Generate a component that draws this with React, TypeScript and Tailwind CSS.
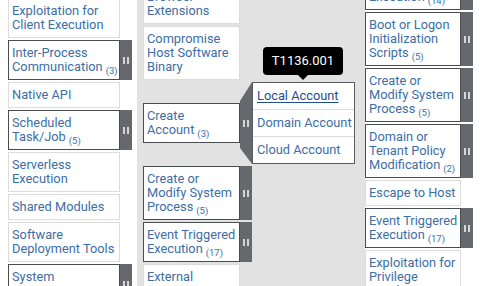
import React from "react";

const FONT = { fontFamily: "Roboto, 'Noto Sans', Arial, sans-serif" };

function Label({ lines, sub, link }: { lines: string[]; sub?: number; link?: boolean }) {
  return (
    <span className="block">
      {lines.map((l, i) => (
        <span key={i} className="block h-[14px] leading-[14px]">
          <span className={link ? "underline decoration-1 underline-offset-2" : ""}>{l}</span>
          {i === lines.length - 1 && sub !== undefined && (
            <span className="relative top-[3px] ml-[3px] text-[9.5px] leading-none">({sub})</span>
          )}
        </span>
      ))}
    </span>
  );
}

function Bars() {
  return (
    <span className="flex gap-[2px]">
      <span className="block h-[7px] w-[2px] bg-[#d6d6d6]" />
      <span className="block h-[7px] w-[2px] bg-[#d6d6d6]" />
    </span>
  );
}

function Sidebar() {
  return (
    <div className="flex w-[12px] shrink-0 items-center justify-center bg-[#65696e]">
      <Bars />
    </div>
  );
}

function Tech({
  lines,
  sub,
  w,
  side,
}: {
  lines: string[];
  sub?: number;
  w: string;
  side?: boolean;
}) {
  const dark = sub !== undefined;
  return (
    <div className="flex">
      <div
        className={`${w} shrink-0 border ${
          dark ? "border-[#4a4d50]" : "border-[#dcdcdc]"
        } bg-white px-[3px] py-[5px] text-[12.8px] leading-[14px] whitespace-nowrap text-[#3d6ea5]`}
      >
        <Label lines={lines} sub={sub} />
      </div>
      {dark && side !== false && <Sidebar />}
    </div>
  );
}

export default function App() {
  return (
    <div className="relative flex h-[286px] w-[481px] overflow-hidden bg-white" style={FONT}>
      {/* Column 1 - Execution */}
      <div className="flex w-[137px] shrink-0 flex-col gap-[2px] bg-white pl-[8px] -mt-[2px]">
        <Tech w="w-[112px]" lines={["Exploitation for", "Client Execution"]} />
        <Tech w="w-[112px]" lines={["Inter-Process", "Communication"]} sub={3} />
        <Tech w="w-[112px]" lines={["Native API"]} />
        <Tech w="w-[112px]" lines={["Scheduled", "Task/Job"]} sub={5} />
        <Tech w="w-[112px]" lines={["Serverless", "Execution"]} />
        <Tech w="w-[112px]" lines={["Shared Modules"]} />
        <Tech w="w-[112px]" lines={["Software", "Deployment Tools"]} />
        <Tech w="w-[112px]" lines={["System", "Services"]} sub={3} />
      </div>

      {/* Column 2 - Persistence (expanded) */}
      <div className="flex w-[228px] shrink-0 flex-col bg-[#e2e2e2] pl-[6px] -mt-[16px]">
        <div className="mb-[2px]">
          <Tech w="w-[97px]" lines={["Browser", "Extensions"]} />
        </div>
        <div className="mb-[2px]">
          <Tech w="w-[97px]" lines={["Compromise", "Host Software", "Binary"]} />
        </div>
        <div className="mb-[2px] flex h-[82px]">
          <div className="flex w-[97px] shrink-0 items-center">
            <Tech w="w-[97px]" lines={["Create", "Account"]} sub={3} side={false} />
          </div>
          <div className="flex w-[12px] shrink-0 items-center justify-center bg-[#65696e] [clip-path:polygon(0_19px,100%_0,100%_100%,0_66px)]">
            <Bars />
          </div>
          <div className="flex w-[103px] shrink-0 flex-col gap-px border border-[#5a5d60] bg-[#dcdcdc] text-[12.8px] leading-[14px] whitespace-nowrap">
            <div className="flex h-[26px] items-center bg-white px-[4px] text-[#1d4f8f]">
              <Label lines={["Local Account"]} link />
            </div>
            <div className="flex h-[26px] items-center bg-white px-[4px] text-[#3d6ea5]">
              Domain Account
            </div>
            <div className="flex h-[26px] items-center bg-white px-[4px] text-[#3d6ea5]">
              Cloud Account
            </div>
          </div>
        </div>
        <div className="mb-[2px]">
          <Tech w="w-[97px]" lines={["Create or", "Modify System", "Process"]} sub={5} />
        </div>
        <div className="mb-[2px]">
          <Tech w="w-[97px]" lines={["Event Triggered", "Execution"]} sub={17} />
        </div>
        <Tech w="w-[97px]" lines={["External", "Remote Services"]} />
      </div>

      {/* Column 4 - Privilege Escalation */}
      <div className="flex w-[116px] shrink-0 flex-col gap-[2px] bg-white -mt-[44px]">
        <Tech w="w-[96px]" lines={["Boot or Logon", "Autostart", "Execution"]} sub={14} />
        <Tech w="w-[96px]" lines={["Boot or Logon", "Initialization", "Scripts"]} sub={5} />
        <Tech w="w-[96px]" lines={["Create or", "Modify System", "Process"]} sub={5} />
        <Tech w="w-[96px]" lines={["Domain or", "Tenant Policy", "Modification"]} sub={2} />
        <Tech w="w-[96px]" lines={["Escape to Host"]} />
        <Tech w="w-[96px]" lines={["Event Triggered", "Execution"]} sub={17} />
        <Tech w="w-[96px]" lines={["Exploitation for", "Privilege", "Escalation"]} />
      </div>

      {/* Tooltip */}
      <div className="absolute left-[263px] top-[47px] flex h-[28px] w-[80px] items-center justify-center rounded-[4px] bg-black text-[13px] text-white">
        T1136.001
        <span className="absolute left-[35px] top-[28px] h-0 w-0 border-x-[5px] border-t-[5px] border-x-transparent border-t-black" />
      </div>
    </div>
  );
}
